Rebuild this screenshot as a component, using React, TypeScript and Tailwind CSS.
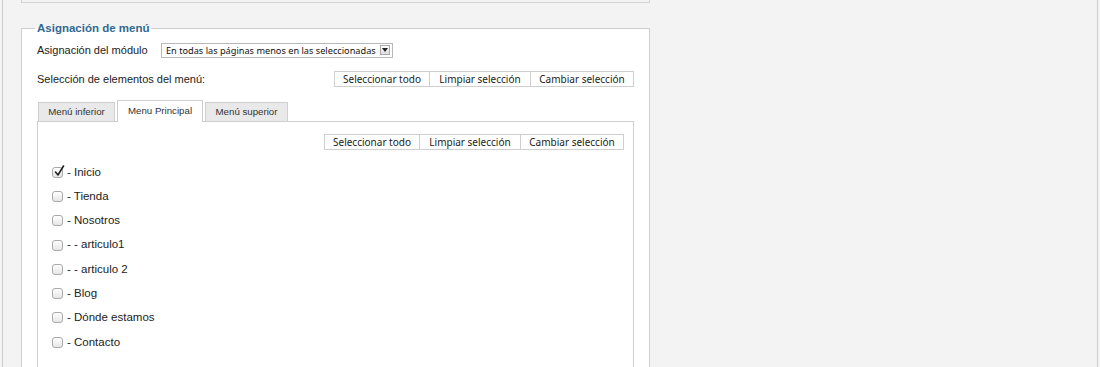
import React from "react";

const items = [
  { label: "- Inicio", checked: true },
  { label: "- Tienda" },
  { label: "- Nosotros" },
  { label: "- - articulo1" },
  { label: "- - articulo 2" },
  { label: "- Blog" },
  { label: "- Dónde estamos" },
  { label: "- Contacto" },
];

function ButtonGroup() {
  return (
    <div className="flex h-[16px] border border-[#cfcfcf] bg-white font-['Noto_Sans',sans-serif] text-[10px] leading-[14px] text-[#222]">
      <div className="w-[94px] flex items-center justify-center">Seleccionar todo</div>
      <div className="w-[101px] flex items-center justify-center border-l border-[#cfcfcf]">Limpiar selección</div>
      <div className="w-[103px] flex items-center justify-center border-l border-[#cfcfcf]">Cambiar selección</div>
    </div>
  );
}

function Checkbox({ checked }: { checked?: boolean }) {
  return (
    <div className="relative w-[11px] h-[11px] rounded-[3px] border border-[#a9a9a9] bg-gradient-to-b from-white to-[#e6e6e6]">
      {checked && (
        <svg className="absolute left-[1px] top-[-3px]" width="11" height="12" viewBox="0 0 11 12">
          <path d="M1.5 7 L4 10 L9.5 1" fill="none" stroke="#222" strokeWidth="1.6" strokeLinecap="round" strokeLinejoin="round" />
        </svg>
      )}
    </div>
  );
}

export default function App() {
  return (
    <div className="w-[1100px] h-[367px] overflow-hidden bg-[#f3f3f3] font-['Liberation_Sans',Arial,sans-serif] text-[#222]">
      <div className="ml-[2px] w-[1096px] h-full border-x border-[#cdcdcd]">
        <div className="ml-[18px] w-[629px]">
          <div className="h-[3px] border-x border-b border-[#d4d4d4]" />
          <fieldset className="mt-[18px] h-[420px] border border-[#cfcfcf] bg-white px-[15px]">
            <legend className="-ml-[2px] px-[2px] text-[11.5px] leading-[15px] font-bold text-[#30688f]">
              Asignación de menú
            </legend>
            <div className="mt-[6px] flex items-center h-[16px]">
              <div className="w-[124px] text-[11px]">Asignación del módulo</div>
              <div className="flex items-center w-[232px] h-[15px] border border-[#b8b8b8] bg-white pl-[4px] pr-[2px] font-['Noto_Sans',sans-serif] text-[9.2px] leading-[13px] text-[#111]">
                <span className="flex-1 whitespace-nowrap">En todas las páginas menos en las seleccionadas</span>
                <div className="w-[10px] h-[10px] border border-[#aaa] bg-gradient-to-b from-white to-[#ddd] flex items-center justify-center">
                  <svg width="6" height="4" viewBox="0 0 6 4"><path d="M0 0 H6 L3 4 Z" fill="#222" /></svg>
                </div>
              </div>
            </div>
            <div className="mt-[13px] flex items-center justify-between h-[16px]">
              <div className="text-[11px]">Selección de elementos del menú:</div>
              <ButtonGroup />
            </div>
            <div className="mt-[13px] ml-[1px] flex items-end gap-[2px] h-[21px] text-[9.7px] text-[#333]">
              <div className="w-[77px] h-[19px] flex items-center justify-center border border-b-0 border-[#cfcfcf] bg-[#e9e9e9]">Menú inferior</div>
              <div className="relative z-10 -mb-px w-[86px] h-[22px] flex items-center justify-center border border-b-0 border-[#cfcfcf] bg-white">Menu Principal</div>
              <div className="w-[83px] h-[19px] flex items-center justify-center border border-b-0 border-[#cfcfcf] bg-[#e9e9e9]">Menú superior</div>
            </div>
            <div className="h-[300px] border border-[#cfcfcf] bg-white pt-[12px] pr-[9px] pl-[14px]">
              <div className="flex justify-end">
                <ButtonGroup />
              </div>
              <div className="mt-[10px] flex flex-col">
                {items.map((it) => (
                  <div key={it.label} className="flex items-center h-[24.3px] gap-[4px]">
                    <Checkbox checked={it.checked} />
                    <span className="text-[11.5px]">{it.label}</span>
                  </div>
                ))}
              </div>
            </div>
          </fieldset>
        </div>
      </div>
    </div>
  );
}
